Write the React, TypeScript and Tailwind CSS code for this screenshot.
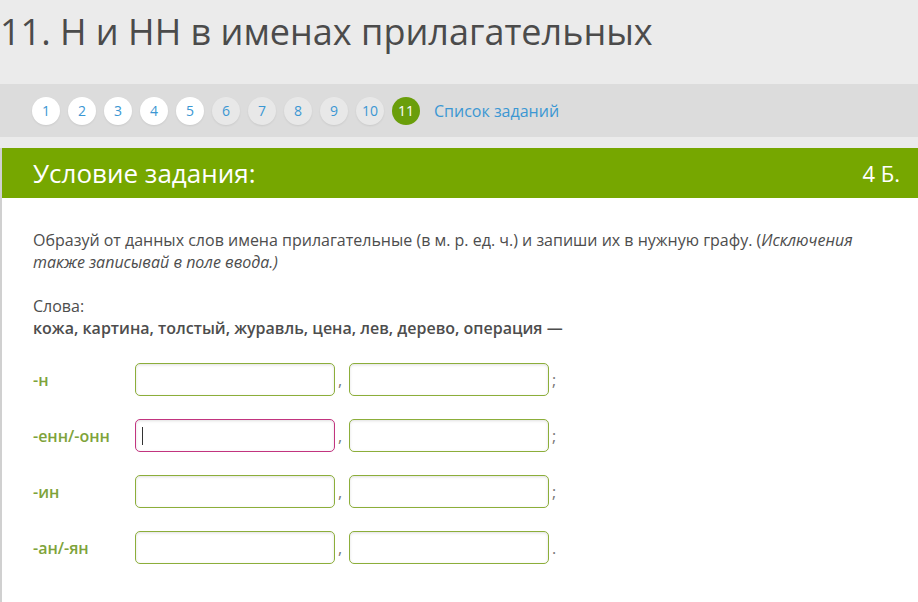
import React from "react";

const pages = ["1", "2", "3", "4", "5", "6", "7", "8", "9", "10", "11"];

const rows = [
  { label: "-н", end: ";", focus: false },
  { label: "-енн/-онн", end: ";", focus: true },
  { label: "-ин", end: ";", focus: false },
  { label: "-ан/-ян", end: ".", focus: false },
];

function Field({ focus }: { focus?: boolean }) {
  return (
    <div
      className={
        "h-[33px] w-[200px] rounded-[5px] border bg-white shadow-[inset_0_1px_3px_rgba(0,0,0,0.12)] flex items-center px-[6px] " +
        (focus ? "border-[#c2347f]" : "border-[#8cae3a]")
      }
    >
      {focus && <div className="h-[18px] w-px bg-[#333]" />}
    </div>
  );
}

export default function App() {
  return (
    <div className="w-[918px] h-[602px] overflow-hidden bg-[#ebebeb] font-['Open_Sans',sans-serif] text-[#4a4a4a]">
      {/* title */}
      <div className="h-[84px] pt-[8px]">
        <h1 className="text-[36px] leading-[48px] text-[#4b4b4b] whitespace-nowrap">
          11. Н и НН в именах прилагательных
        </h1>
      </div>

      {/* task nav */}
      <div className="h-[53px] bg-[#dcdcdc] flex items-center pl-[32px] gap-[8px]">
        {pages.map((p, i) => (
          <div
            key={p}
            className={
              "w-[28px] h-[28px] rounded-full flex items-center justify-center text-[14px] " +
              (i === 10
                ? "bg-[#6a9e0a] text-white"
                : i < 5
                ? "bg-white text-[#3b97d3] shadow-[0_1px_2px_rgba(0,0,0,0.08)]"
                : "bg-[#e8e8e8] text-[#3b97d3] shadow-[0_1px_2px_rgba(0,0,0,0.08)]")
            }
          >
            {p}
          </div>
        ))}
        <span className="ml-[6px] text-[16px] text-[#3b97d3]">Список заданий</span>
      </div>

      <div className="h-[11px]" />

      {/* task */}
      <div className="border-l-2 border-[#d0d0d0] bg-white h-full">
        <div className="h-[50px] bg-[#76a700] flex items-center justify-between pl-[31px] pr-[18px] text-white">
          <span className="text-[26px]">Условие задания:</span>
          <span className="text-[22px]">4 Б.</span>
        </div>

        <div className="pl-[31px] pr-[30px] pt-[31px] text-[16px] leading-[22px] text-[#4d4d4d]">
          <p>
            Образуй от данных слов имена прилагательные (в м. р. ед. ч.) и запиши их в нужную графу. (
            <i>Исключения также записывай в поле ввода.)</i>
          </p>
          <p className="mt-[22px]">Слова:</p>
          <p className="font-semibold">кожа, картина, толстый, журавль, цена, лев, дерево, операция —</p>

          <div className="mt-[24px] flex flex-col gap-[23px]">
            {rows.map((r) => (
              <div key={r.label} className="flex items-center">
                <span className="w-[102px] font-semibold text-[16px] text-[#7ea33a]">{r.label}</span>
                <Field focus={r.focus} />
                <span className="w-[14px] pl-[3px] text-[#777]">,</span>
                <Field />
                <span className="pl-[3px] text-[#777]">{r.end}</span>
              </div>
            ))}
          </div>
        </div>
      </div>
    </div>
  );
}
